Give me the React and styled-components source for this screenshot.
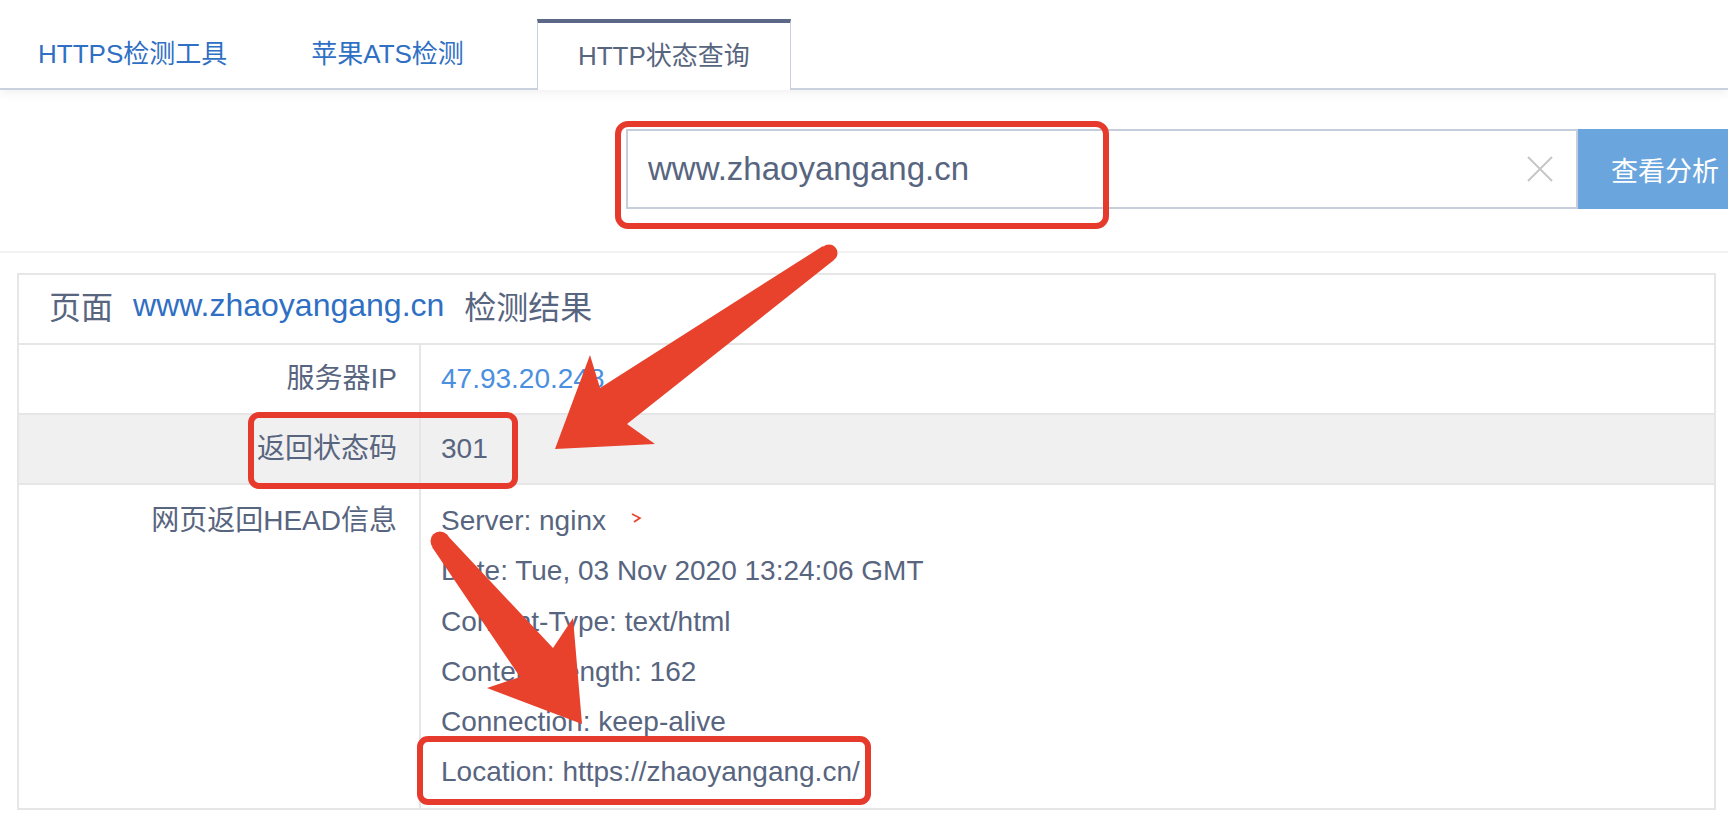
import styled, { createGlobalStyle } from 'styled-components';

const GlobalStyle = createGlobalStyle`
  html, body {
    margin: 0;
    padding: 0;
    background: #fff;
    overflow: hidden;
  }
  * {
    box-sizing: border-box;
  }
`;

const tabs = ['HTTPS检测工具', '苹果ATS检测', 'HTTP状态查询'];

const headers = [
  'Server: nginx',
  'Date: Tue, 03 Nov 2020 13:24:06 GMT',
  'Content-Type: text/html',
  'Content-Length: 162',
  'Connection: keep-alive',
  'Location: https://zhaoyangang.cn/',
];

const ClearIcon = () => (
  <svg width="28" height="28" viewBox="0 0 28 28">
    <path d="M2 2 L26 26 M26 2 L2 26" stroke="#c6c6c6" strokeWidth="2" fill="none" />
  </svg>
);

// red marks drawn on top of the screenshot
const Annotations = () => (
  <Overlay width="1728" height="824" viewBox="0 0 1728 824">
    <g fill="none" stroke="#e63a2c" strokeWidth="6">
      <rect x="618" y="124" width="488" height="102" rx="10" />
      <rect x="251" y="415" width="264" height="71" rx="8" />
      <rect x="420" y="739" width="448" height="63" rx="8" />
    </g>
    <g fill="#e8412c">
      <polygon points="823,246 600,388 590,355 555,449 655,444 627,424 834,260" />
      <circle cx="829" cy="253" r="8.5" />
      <polygon points="447,535 553,648 573,618 582,724 487,688 520,677 432,547" />
      <circle cx="440" cy="541" r="9.5" />
    </g>
    <path d="M632 514 L640 518 L634 522" stroke="#e8412c" strokeWidth="1.6" fill="none" />
  </Overlay>
);

const App = () => {
  return (
    <Page>
      <GlobalStyle />
      <TabBar>
        {tabs.map((t, i) => (
          <Tab key={t} $active={i === 2}>
            {t}
          </Tab>
        ))}
      </TabBar>

      <SearchSection>
        <InputBox>
          <InputText>www.zhaoyangang.cn</InputText>
          <ClearIcon />
        </InputBox>
        <SearchButton>查看分析</SearchButton>
      </SearchSection>

      <ResultBox>
        <ResultHeader>
          <span>页面</span>
          <HostLink>www.zhaoyangang.cn</HostLink>
          <span>检测结果</span>
        </ResultHeader>
        <Row>
          <Label>服务器IP</Label>
          <Value $link>47.93.20.248</Value>
        </Row>
        <Row $shaded>
          <Label>返回状态码</Label>
          <Value>301</Value>
        </Row>
        <Row $last>
          <Label $tall>网页返回HEAD信息</Label>
          <Value $tall>
            {headers.map((h) => (
              <div key={h}>{h}</div>
            ))}
          </Value>
        </Row>
      </ResultBox>

      <Annotations />
    </Page>
  );
};
export default App;

const Page = styled.div`
  position: relative;
  width: 1728px;
  height: 824px;
  overflow: hidden;
  font-family: 'Liberation Sans', 'Noto Sans CJK SC', sans-serif;
  color: #58657f;
`;

const TabBar = styled.div`
  display: flex;
  align-items: flex-end;
  height: 90px;
  background: #fff;
  border-bottom: 2px solid #c8d1dd;
  box-shadow: 0 3px 10px rgba(0, 0, 0, 0.06);
  position: relative;
  z-index: 1;
`;

const Tab = styled.div`
  display: flex;
  align-items: center;
  height: 69px;
  padding: 0 40px 4px;
  font-size: 26px;
  color: #2f6fc4;
  &:first-child {
    padding-left: 38px;
    padding-right: 44px;
  }
  ${(p) =>
    p.$active &&
    `
    height: 71px;
    margin-bottom: -2px;
    margin-left: 33px;
    padding-bottom: 6px;
    background: #fff;
    color: #58657f;
    border-top: 4px solid #5b6886;
    border-left: 1px solid #c8d1dd;
    border-right: 1px solid #c8d1dd;
  `}
`;

const SearchSection = styled.div`
  display: flex;
  padding: 39px 0 42px 626px;
  border-bottom: 2px solid #f2f2f2;
`;

const InputBox = styled.div`
  display: flex;
  align-items: center;
  justify-content: space-between;
  flex-shrink: 0;
  width: 952px;
  height: 80px;
  padding: 0 22px 0 20px;
  border: 2px solid #c6cedb;
`;

const InputText = styled.span`
  font-size: 33px;
  color: #58657f;
`;

const SearchButton = styled.div`
  display: flex;
  align-items: center;
  flex-shrink: 0;
  width: 174px;
  height: 80px;
  padding-left: 33px;
  background: #6aa6dd;
  color: #fff;
  font-size: 27px;
`;

const ResultBox = styled.div`
  margin: 20px 12px 0 17px;
  border: 2px solid #e6e6e6;
`;

const ResultHeader = styled.div`
  display: flex;
  align-items: center;
  height: 70px;
  padding: 0 0 8px 30px;
  font-size: 32px;
  border-bottom: 2px solid #e6e6e6;
`;

const HostLink = styled.span`
  margin: 0 20px;
  color: #2f6fc4;
`;

const Row = styled.div`
  display: grid;
  grid-template-columns: 402px 1fr;
  font-size: 28px;
  line-height: 50px;
  background: ${(p) => (p.$shaded ? '#f0f0f0' : '#fff')};
  border-bottom: ${(p) => (p.$last ? 'none' : '2px solid #e6e6e6')};
`;

const Label = styled.div`
  padding: ${(p) => (p.$tall ? '11px' : '9px')} 22px 9px 0;
  text-align: right;
  border-right: 2px solid #e6e6e6;
`;

const Value = styled.div`
  padding: ${(p) => (p.$tall ? '11px 0 10px 20px' : '9px 0 9px 20px')};
  line-height: ${(p) => (p.$tall ? '50.3px' : '50px')};
  color: ${(p) => (p.$link ? '#4a8fe0' : '#58657f')};
`;

const Overlay = styled.svg`
  position: absolute;
  top: 0;
  left: 0;
  pointer-events: none;
  z-index: 2;
`;
